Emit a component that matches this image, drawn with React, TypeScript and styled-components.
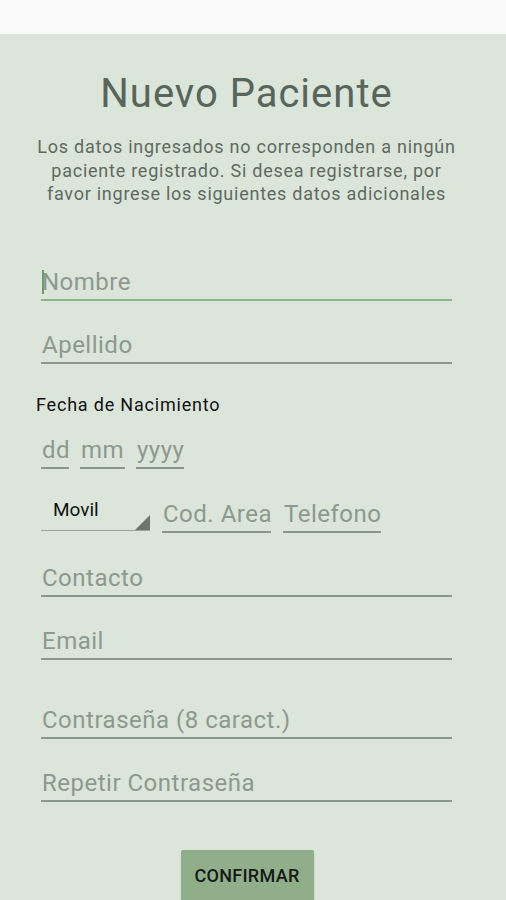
import styled, { createGlobalStyle } from "styled-components";

const GlobalStyle = createGlobalStyle`
  html, body {
    margin: 0;
    padding: 0;
    background: #dbe5da;
  }
  * {
    box-sizing: border-box;
  }
`;

const Screen = styled.div`
  width: 506px;
  height: 900px;
  overflow: hidden;
  background: #dbe5da;
  font-family: Roboto, "Liberation Sans", sans-serif;
`;

const StatusBar = styled.div`
  height: 34px;
  background: #f8f9f8;
`;

const Header = styled.div`
  padding-right: 13px;
`;

const Title = styled.h1`
  margin: 37px 0 0;
  font-size: 40px;
  line-height: 46px;
  font-weight: 400;
  letter-spacing: 1px;
  text-align: center;
  color: #58655a;
`;

const Subtitle = styled.p`
  margin: 18px 0 0;
  font-size: 18px;
  line-height: 23.5px;
  letter-spacing: 0.75px;
  text-align: center;
  color: #5f6a61;
`;

const Form = styled.div`
  display: flex;
  flex-direction: column;
  padding: 0 54px 0 41px;
`;

const Item = styled.div<{ $mt: number }>`
  margin-top: ${(p) => p.$mt}px;
  position: relative;
`;

const Input = styled.input<{ $focused?: boolean; $width?: number }>`
  display: block;
  width: ${(p) => (p.$width ? `${p.$width}px` : "100%")};
  height: 38px;
  padding: 2px 0 0 1px;
  border: none;
  border-bottom: 2px solid ${(p) => (p.$focused ? "#8cb887" : "#8a978c")};
  background: transparent;
  font-family: Roboto, "Liberation Sans", sans-serif;
  font-size: 24px;
  letter-spacing: 0.5px;
  color: #333;
  outline: none;
  &::placeholder {
    color: #8d998f;
  }
`;

const Cursor = styled.span`
  position: absolute;
  left: 1px;
  top: 7px;
  width: 2px;
  height: 24px;
  background: #6f9a6b;
`;

const Label = styled.div`
  font-size: 18px;
  line-height: 20px;
  letter-spacing: 0.8px;
  color: #111;
  margin-left: -5px;
`;

const Row = styled.div<{ $gap: number }>`
  display: flex;
  align-items: flex-end;
  gap: ${(p) => p.$gap}px;
`;

const Spinner = styled.div`
  position: relative;
  width: 109px;
  height: 36px;
  border-bottom: 1px solid #9aa69c;
  padding: 2px 0 0 12px;
  font-size: 19px;
  line-height: 26px;
  color: #111;
  margin-bottom: 2px;
`;

const Triangle = styled.span`
  position: absolute;
  right: 0;
  bottom: 0;
  width: 0;
  height: 0;
  border-left: 15px solid transparent;
  border-bottom: 15px solid #6c786e;
`;

const ButtonWrap = styled.div`
  display: flex;
  justify-content: center;
  margin-top: 48px;
`;

const Button = styled.button`
  width: 133px;
  height: 56px;
  margin-right: 12px;
  padding: 0 0 4px;
  border: none;
  border-radius: 2px;
  background: #8fae89;
  box-shadow: 0 1px 2px rgba(0, 0, 0, 0.15);
  font-family: Roboto, "Liberation Sans", sans-serif;
  font-size: 18px;
  font-weight: 500;
  color: #141a15;
  letter-spacing: 0.3px;
`;

export default function App() {
  return (
    <Screen>
      <GlobalStyle />
      <StatusBar />
      <Header>
        <Title>Nuevo Paciente</Title>
        <Subtitle>
          Los datos ingresados no corresponden a ningún
          <br />
          paciente registrado. Si desea registrarse, por
          <br />
          favor ingrese los siguientes datos adicionales
        </Subtitle>
      </Header>
      <Form>
        <Item $mt={57}>
          <Input $focused placeholder="Nombre" />
          <Cursor />
        </Item>
        <Item $mt={25}>
          <Input placeholder="Apellido" />
        </Item>
        <Item $mt={31}>
          <Label>Fecha de Nacimiento</Label>
        </Item>
        <Item $mt={16}>
          <Row $gap={11}>
            <Input $width={28} placeholder="dd" />
            <Input $width={45} placeholder="mm" />
            <Input $width={48} placeholder="yyyy" />
          </Row>
        </Item>
        <Item $mt={26}>
          <Row $gap={12}>
            <Spinner>
              Movil
              <Triangle />
            </Spinner>
            <Input $width={109} placeholder="Cod. Area" />
            <Input $width={98} placeholder="Telefono" />
          </Row>
        </Item>
        <Item $mt={26}>
          <Input placeholder="Contacto" />
        </Item>
        <Item $mt={25}>
          <Input placeholder="Email" />
        </Item>
        <Item $mt={41}>
          <Input placeholder="Contraseña (8 caract.)" />
        </Item>
        <Item $mt={25}>
          <Input placeholder="Repetir Contraseña" />
        </Item>
      </Form>
      <ButtonWrap>
        <Button>CONFIRMAR</Button>
      </ButtonWrap>
    </Screen>
  );
}
